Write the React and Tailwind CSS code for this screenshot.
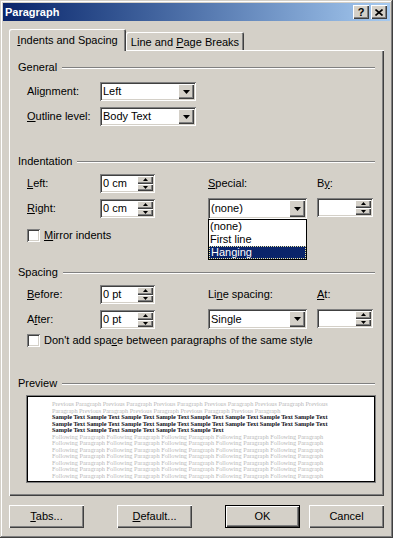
import React from "react";

const FONT = "font-['Liberation_Sans',Arial,sans-serif]";
const SUNKEN =
  "shadow-[inset_1px_1px_#808080,inset_-1px_-1px_#ffffff,inset_2px_2px_#404040,inset_-2px_-2px_#d4d0c8]";
const RAISED =
  "shadow-[inset_1px_1px_#ffffff,inset_-1px_-1px_#404040,inset_-2px_-2px_#808080]";
const WIN =
  "shadow-[inset_-1px_-1px_#404040,inset_1px_1px_#d4d0c8,inset_-2px_-2px_#808080,inset_2px_2px_#ffffff]";

function DownArrow({ w = 7 }) {
  const h = Math.ceil(w / 2);
  return (
    <svg width={w} height={h} viewBox={`0 0 ${w} ${h}`}>
      <polygon points={`0,0 ${w},0 ${w / 2},${h}`} fill="#000" />
    </svg>
  );
}
function UpArrow({ w = 5 }) {
  const h = Math.ceil(w / 2);
  return (
    <svg width={w} height={h} viewBox={`0 0 ${w} ${h}`}>
      <polygon points={`0,${h} ${w},${h} ${w / 2},0`} fill="#000" />
    </svg>
  );
}

function Combo({ value, w = "w-[96px]", h = "h-[19px]" }) {
  return (
    <div className={`${w} ${h} bg-white ${SUNKEN} p-[2px] flex items-stretch`}>
      <div className="flex-1 pl-[1px] flex items-center whitespace-nowrap">{value}</div>
      <div className={`w-[16px] bg-[#d4d0c8] ${RAISED} flex items-center justify-center`}>
        <DownArrow />
      </div>
    </div>
  );
}

function Spin({ value, w = "w-[55px]" }) {
  return (
    <div className={`${w} h-[19px] bg-white ${SUNKEN} p-[2px] flex items-stretch`}>
      <div className="flex-1 pl-[1px] flex items-center whitespace-nowrap">{value}</div>
      <div className="w-[16px] flex flex-col">
        <div className={`flex-1 bg-[#d4d0c8] ${RAISED} flex items-center justify-center`}>
          <UpArrow />
        </div>
        <div className={`flex-1 bg-[#d4d0c8] ${RAISED} flex items-center justify-center`}>
          <DownArrow w={5} />
        </div>
      </div>
    </div>
  );
}

function Check({ children }) {
  return (
    <div className="flex items-center h-[13px]">
      <div className={`w-[13px] h-[13px] bg-white ${SUNKEN}`} />
      <span className="ml-[4px] whitespace-nowrap">{children}</span>
    </div>
  );
}

function Group({ label, className = "" }) {
  return (
    <div className={`flex items-center h-[13px] ${className}`}>
      <span className="whitespace-nowrap">{label}</span>
      <div className="flex-1 ml-[5px] h-[2px] border-t border-t-[#808080] border-b border-b-white" />
    </div>
  );
}

function Btn({ children, def = false, className = "" }) {
  return (
    <div
      className={`w-[75px] h-[23px] bg-[#d4d0c8] flex items-center justify-center ${className} ${
        def ? "border border-black" : ""
      }`}
    >
      <div className={`w-full h-full flex items-center justify-center ${RAISED}`}>{children}</div>
    </div>
  );
}

const prev1 = "Previous Paragraph Previous Paragraph Previous Paragraph Previous Paragraph Previous Paragraph Previous";
const prev2 = "Paragraph Previous Paragraph Previous Paragraph Previous Paragraph Previous Paragraph";
const samp = "Sample Text Sample Text Sample Text Sample Text Sample Text Sample Text Sample Text Sample Text";
const samp3 = "Sample Text Sample Text Sample Text Sample Text Sample Text";
const foll = "Following Paragraph Following Paragraph Following Paragraph Following Paragraph Following Paragraph";

export default function App() {
  return (
    <div
      className={`w-[393px] h-[538px] bg-[#d4d0c8] p-[3px] flex flex-col ${FONT} text-[11px] leading-[13px] text-black ${WIN}`}
    >
      {/* Title bar */}
      <div className="h-[18px] flex items-center bg-linear-to-r from-[#0a246a] to-[#a6caf0] pl-[2px] pr-[3px]">
        <span className="text-white font-bold flex-1">Paragraph</span>
        <div className={`w-[16px] h-[14px] bg-[#d4d0c8] ${RAISED} flex items-center justify-center font-bold text-[11px]`}>
          ?
        </div>
        <div className={`w-[16px] h-[14px] ml-[2px] bg-[#d4d0c8] ${RAISED} flex items-center justify-center`}>
          <svg width="8" height="7" viewBox="0 0 8 7">
            <path d="M0.5 0.5 L7.5 6.5 M7.5 0.5 L0.5 6.5" stroke="#000" strokeWidth="1.6" />
          </svg>
        </div>
      </div>

      {/* Tabs */}
      <div className="flex items-end ml-[6px] mt-[8px] h-[22px] relative z-10">
        <div className="w-[117px] h-[22px] bg-[#d4d0c8] rounded-t-[2px] shadow-[inset_1px_1px_#ffffff,inset_-1px_0_#404040,inset_-2px_0_#808080] flex items-center justify-center pt-[1px]">
          <span>
            <u>I</u>ndents and Spacing
          </span>
        </div>
        <div className="w-[118px] h-[18px] mb-[1px] bg-[#d4d0c8] rounded-t-[2px] shadow-[inset_1px_1px_#ffffff,inset_-1px_0_#404040,inset_-2px_0_#808080] flex items-center justify-center pt-[2px]">
          <span>
            Line and <u>P</u>age Breaks
          </span>
        </div>
      </div>

      {/* Panel */}
      <div className={`ml-[6px] -mt-[1px] w-[375px] h-[446px] bg-[#d4d0c8] ${RAISED} px-[9px] flex flex-col`}>
        <Group label="General" className="mt-[11px]" />
        <div className="flex items-center mt-[8px] pl-[9px]">
          <span className="w-[73px]">
            Ali<u>g</u>nment:
          </span>
          <Combo value="Left" />
        </div>
        <div className="flex items-center mt-[6px] pl-[9px]">
          <span className="w-[73px]">
            <u>O</u>utline level:
          </span>
          <Combo value="Body Text" />
        </div>

        <Group label="Indentation" className="mt-[29px]" />
        <div className="flex items-center mt-[6px] pl-[9px] h-[19px]">
          <span className="w-[73px]">
            <u>L</u>eft:
          </span>
          <div className="w-[108px]">
            <Spin value="0 cm" />
          </div>
          <span className="w-[109px]">
            <u>S</u>pecial:
          </span>
          <span>
            B<u>y</u>:
          </span>
        </div>
        <div className="flex items-start mt-[5px] pl-[9px] h-[21px]">
          <span className="w-[73px] h-[19px] mt-[1px] flex items-center">
            <u>R</u>ight:
          </span>
          <div className="w-[108px] mt-[1px]">
            <Spin value="0 cm" />
          </div>
          <div className="w-[109px] relative">
            <Combo value="(none)" w="w-[99px]" h="h-[21px]" />
            <div className="absolute left-0 top-full w-[99px] bg-white border border-black flex flex-col z-20">
              <div className="h-[13px] pl-[1px] flex items-center">(none)</div>
              <div className="h-[13px] pl-[1px] flex items-center">First line</div>
              <div className="h-[13px] pl-[1px] flex items-center bg-[#0a246a] text-white border border-dotted border-[#f0e8a0]">
                Hanging
              </div>
            </div>
          </div>
          <Spin value="" w="w-[56px]" />
        </div>
        <div className="mt-[10px] pl-[9px]">
          <Check>
            <u>M</u>irror indents
          </Check>
        </div>

        <Group label="Spacing" className="mt-[24px]" />
        <div className="flex items-center mt-[6px] pl-[9px] h-[19px]">
          <span className="w-[73px]">
            <u>B</u>efore:
          </span>
          <div className="w-[108px]">
            <Spin value="0 pt" />
          </div>
          <span className="w-[109px]">
            Li<u>n</u>e spacing:
          </span>
          <span>
            <u>A</u>t:
          </span>
        </div>
        <div className="flex items-start mt-[5px] pl-[9px] h-[21px]">
          <span className="w-[73px] h-[19px] mt-[1px] flex items-center">
            A<u>f</u>ter:
          </span>
          <div className="w-[108px] mt-[1px]">
            <Spin value="0 pt" />
          </div>
          <div className="w-[109px]">
            <Combo value="Single" w="w-[99px]" h="h-[20px]" />
          </div>
          <Spin value="" w="w-[56px]" />
        </div>
        <div className="mt-[4px] pl-[9px]">
          <Check>
            Don't add spa<u>c</u>e between paragraphs of the same style
          </Check>
        </div>

        <Group label="Preview" className="mt-[30px]" />
        <div className="mt-[6px] ml-[9px] h-[86px] bg-white border border-black shadow-[0_0_0_1px_#808080] pl-[24px] pt-[4px] font-['Liberation_Serif','Times_New_Roman',serif] text-[6.3px] leading-[6.5px] whitespace-nowrap overflow-hidden">
          <div className="text-[#b8b8b8]">{prev1}</div>
          <div className="text-[#b8b8b8]">{prev2}</div>
          <div className="font-bold text-[#101020]">{samp}</div>
          <div className="font-bold text-[#101020]">{samp}</div>
          <div className="font-bold text-[#101020]">{samp3}</div>
          <div className="text-[#b8b8b8]">{foll}</div>
          <div className="text-[#b8b8b8]">{foll}</div>
          <div className="text-[#b8b8b8]">{foll}</div>
          <div className="text-[#b8b8b8]">{foll}</div>
          <div className="text-[#b8b8b8]">{foll}</div>
          <div className="text-[#b8b8b8]">{foll}</div>
          <div className="text-[#b8b8b8]">{foll}</div>
        </div>
      </div>

      {/* Buttons */}
      <div className="flex mt-[9px] ml-[6px]">
        <Btn>
          <span>
            <u>T</u>abs...
          </span>
        </Btn>
        <Btn className="ml-[33px]">
          <span>
            <u>D</u>efault...
          </span>
        </Btn>
        <Btn def className="ml-[33px]">
          OK
        </Btn>
        <Btn className="ml-[9px]">Cancel</Btn>
      </div>
    </div>
  );
}
